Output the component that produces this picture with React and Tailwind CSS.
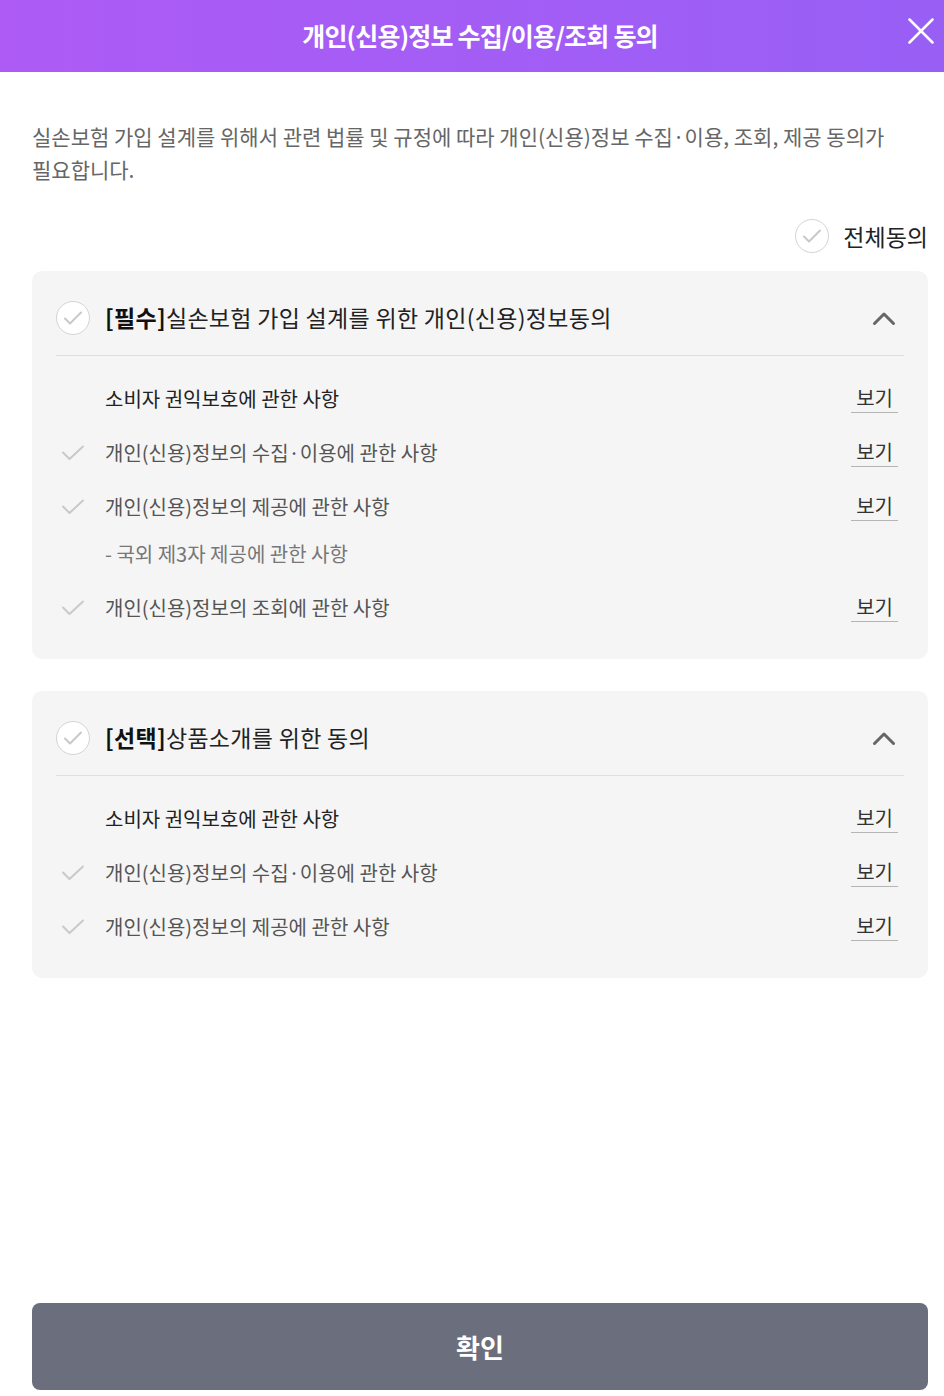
import React from 'react';

const FONT = { fontFamily: '"Noto Sans CJK KR", "Noto Sans", sans-serif' };

// round grey check button used for section / all agree
const CircleCheck = () => (
  <span className="flex h-[34px] w-[34px] shrink-0 items-center justify-center rounded-full border border-[#d4d4d4] bg-white">
    <svg width="22" height="18" viewBox="0 0 22 18" fill="none" aria-hidden="true">
      <path d="M3 9.5l5 5L19 3.5" stroke="#c8c8c8" strokeWidth="2" strokeLinecap="round" strokeLinejoin="round" />
    </svg>
  </span>
);

const PlainCheck = () => (
  <svg width="24" height="16" viewBox="0 0 24 16" fill="none" aria-hidden="true">
    <path d="M2 7.5l6.5 6.5L22 1.5" stroke="#c9c9c9" strokeWidth="2" strokeLinecap="round" strokeLinejoin="round" />
  </svg>
);

const ChevronUp = () => (
  <svg width="24" height="16" viewBox="0 0 24 16" fill="none" aria-hidden="true">
    <path d="M2.5 13.5L12 4l9.5 9.5" stroke="#666666" strokeWidth="3" strokeLinecap="round" strokeLinejoin="round" />
  </svg>
);

const ViewLink = () => (
  <span className="border-b border-[#b5b5b5] px-[5px] pb-[1px] text-[20px] leading-[26px] text-[#333]">보기</span>
);

const Row = ({ label, check, strong }) => (
  <div className="flex h-[54px] items-center">
    <span className="flex w-[34px] justify-center">{check && <PlainCheck />}</span>
    <span className={`ml-[15px] flex-1 text-[20px] ${strong ? 'text-[#222]' : 'text-[#555]'}`}>{label}</span>
    <ViewLink />
  </div>
);

const Section = ({ tag, title, children }) => (
  <section className="rounded-[10px] bg-[#f5f5f5] pb-[24px]">
    <div className="mx-[24px] border-b border-[#dedede] pt-[12px] pb-[2px]">
      <div className="flex h-[70px] items-center">
        <CircleCheck />
        <h2 className="ml-[15px] flex-1 text-[23px] tracking-[0.3px] text-[#222]">
          <b className="font-bold text-[#111]">{tag}</b>
          {title}
        </h2>
        <span className="mr-[8px]"><ChevronUp /></span>
      </div>
    </div>
    <div className="pt-[16px] pl-[24px] pr-[30px]">{children}</div>
  </section>
);

export default function App() {
  return (
    <div className="flex h-[1396px] flex-col bg-white" style={FONT}>
      <header className="relative flex h-[72px] shrink-0 items-center justify-center bg-gradient-to-r from-[#ae5bf5] to-[#985ff5] pl-[16px]">
        <h1 className="text-[25px] font-bold tracking-[-0.8px] text-white">개인(신용)정보 수집/이용/조회 동의</h1>
        <button className="absolute right-[10px] top-[18px]" aria-label="닫기">
          <svg width="26" height="26" viewBox="0 0 26 26" fill="none">
            <path d="M1.5 1.5l23 23M24.5 1.5l-23 23" stroke="white" strokeWidth="2.5" strokeLinecap="round" />
          </svg>
        </button>
      </header>

      <main className="flex flex-1 flex-col pl-[32px] pr-[16px]">
        <p className="mt-[48px] break-keep pr-[16px] text-[21px] leading-[33px] text-[#666]">
          실손보험 가입 설계를 위해서 관련 법률 및 규정에 따라 개인(신용)정보 수집·이용, 조회, 제공 동의가 필요합니다.
        </p>

        <div className="mt-[33px] flex items-center justify-end">
          <CircleCheck />
          <span className="ml-[14px] text-[23px] text-[#222]">전체동의</span>
        </div>

        <div className="mt-[17px] flex flex-col gap-[32px]">
          <Section tag="[필수]" title="실손보험 가입 설계를 위한 개인(신용)정보동의">
            <Row label="소비자 권익보호에 관한 사항" strong />
            <Row label="개인(신용)정보의 수집·이용에 관한 사항" check />
            <Row label="개인(신용)정보의 제공에 관한 사항" check />
            <div className="flex h-[47px] items-start pt-[7px]">
              <span className="ml-[49px] text-[20px] leading-[26px] text-[#777]">- 국외 제3자 제공에 관한 사항</span>
            </div>
            <Row label="개인(신용)정보의 조회에 관한 사항" check />
          </Section>

          <Section tag="[선택]" title="상품소개를 위한 동의">
            <Row label="소비자 권익보호에 관한 사항" strong />
            <Row label="개인(신용)정보의 수집·이용에 관한 사항" check />
            <Row label="개인(신용)정보의 제공에 관한 사항" check />
          </Section>
        </div>

        <div className="flex-1" />

        <button className="mb-[6px] h-[87px] w-full rounded-[8px] bg-[#6b6e7c] text-[26px] font-bold text-white">
          확인
        </button>
      </main>
    </div>
  );
}
